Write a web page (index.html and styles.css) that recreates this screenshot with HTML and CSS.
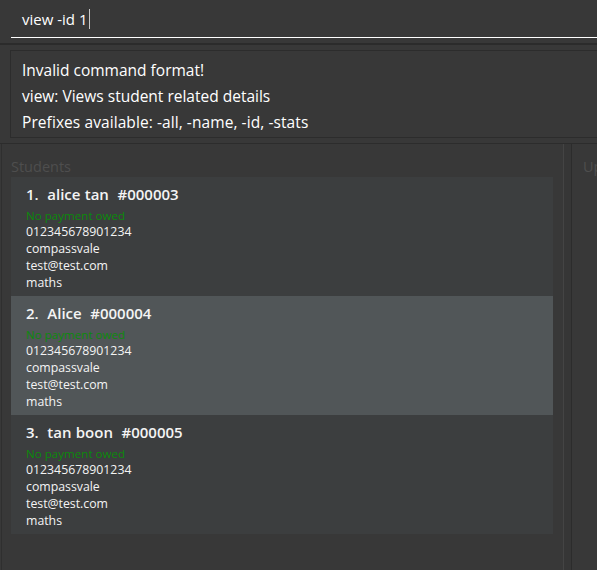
FILE: index.html
```html
<!DOCTYPE html>
<html lang="en">
<head>
<meta charset="utf-8">
<title>Tutor app</title>
<link rel="stylesheet" href="styles.css">
</head>
<body>
<div class="app">
  <div class="command">
    <div class="command-field"><span class="cmd-text">view -id 1</span><span class="caret"></span></div>
  </div>
  <div class="sep"></div>
  <div class="result">
    <div class="result-box">
      <p>Invalid command format!</p>
      <p>view: Views student related details</p>
      <p>Prefixes available: -all, -name, -id, -stats</p>
    </div>
  </div>
  <div class="main">
    <section class="panel students">
      <div class="panel-title">Students</div>
      <ul class="list">
        <li class="card even">
          <div class="name">1.&nbsp; alice tan&nbsp; #000003</div>
          <div class="pay">No payment owed</div>
          <div class="detail">012345678901234</div>
          <div class="detail">compassvale</div>
          <div class="detail">test@test.com</div>
          <div class="detail">maths</div>
        </li>
        <li class="card odd">
          <div class="name">2.&nbsp; Alice&nbsp; #000004</div>
          <div class="pay">No payment owed</div>
          <div class="detail">012345678901234</div>
          <div class="detail">compassvale</div>
          <div class="detail">test@test.com</div>
          <div class="detail">maths</div>
        </li>
        <li class="card even">
          <div class="name">3.&nbsp; tan boon&nbsp; #000005</div>
          <div class="pay">No payment owed</div>
          <div class="detail">012345678901234</div>
          <div class="detail">compassvale</div>
          <div class="detail">test@test.com</div>
          <div class="detail">maths</div>
        </li>
      </ul>
    </section>
    <div class="divider"></div>
    <section class="panel upcoming">
      <div class="panel-title clip">Up</div>
    </section>
  </div>
</div>
</body>
</html>
```
FILE: styles.css
```css
* { box-sizing: border-box; }
html, body {
  margin: 0;
  padding: 0;
  background: #383838;
  overflow: hidden;
}
body {
  font-family: "Open Sans", "Noto Sans", sans-serif;
  color: #ffffff;
  width: 597px;
  height: 570px;
}
.app {
  display: flex;
  flex-direction: column;
  height: 570px;
}
.command {
  height: 43px;
  padding-left: 11px;
}
.command-field {
  height: 38px;
  border-bottom: 1px solid #ffffff;
  margin-right: -20px;
  display: flex;
  align-items: center;
  padding-left: 11px;
  padding-top: 1px;
  font-size: 15px;
}
.cmd-text { white-space: pre; }
.caret {
  display: inline-block;
  width: 1px;
  height: 20px;
  background: #c8c8c8;
  margin-left: 1px;
}
.sep {
  height: 2px;
  background: #2b2b2b;
}
.result {
  height: 98px;
  padding: 5px 0 0 10px;
}
.result-box {
  border: 1px solid #2c2c2c;
  margin-right: -20px;
  padding: 6px 11px 2px;
  font-size: 15.5px;
  line-height: 26px;
}
.result-box p { margin: 0; white-space: nowrap; }
.result-box p:last-child { letter-spacing: 0.08px; }
.main {
  flex: 1;
  display: flex;
  border-top: 1px solid #2c2c2c;
  padding-left: 1px;
  min-height: 0;
}
.panel {
  border-left: 1px solid #2f2f2f;
  border-right: 1px solid #444444;
  overflow: hidden;
}
.students {
  width: 563px;
  padding: 13px 10px 0 9px;
}
.panel-title {
  font-size: 14.5px;
  line-height: 20px;
  color: #4e4e4e;
  white-space: nowrap;
}
.list {
  list-style: none;
  margin: 0;
  padding: 0;
}
.card {
  padding: 6px 15px 5px;
}
.card.even { background: #3c3e3f; }
.card.odd { background: #515658; }
.name {
  font-size: 15px;
  font-weight: 600;
  line-height: 22px;
  white-space: pre;
  word-spacing: 0.4px;
  color: #f4f4f4;
}
.pay {
  margin-top: 3px;
  font-size: 11.6px;
  line-height: 15px;
  color: #0b8a0b;
}
.detail {
  font-size: 12.3px;
  line-height: 17px;
  color: #f4f4f4;
}
.divider {
  width: 7px;
  background: #363636;
}
.upcoming {
  flex: 1;
  border-left: 1px solid #2c2c2c;
  border-right: none;
  padding: 13px 0 0 11px;
}
```
